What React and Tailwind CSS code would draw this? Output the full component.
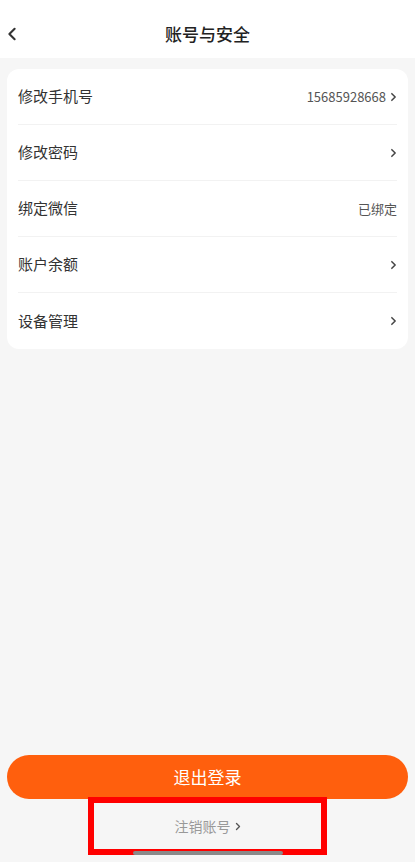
const rows = [
  { label: "修改手机号", value: "15685928668", arrow: true },
  { label: "修改密码", value: "", arrow: true },
  { label: "绑定微信", value: "已绑定", arrow: false },
  { label: "账户余额", value: "", arrow: true },
  { label: "设备管理", value: "", arrow: true },
];

function Chevron({ className = "" }) {
  return (
    <svg viewBox="0 0 8 12" className={className} fill="none" stroke="currentColor" strokeWidth="1.8" strokeLinecap="round" strokeLinejoin="round">
      <path d="M2 2l4 4-4 4" />
    </svg>
  );
}

export default function App() {
  return (
    <div
      className="w-[415px] h-[862px] bg-[#f6f6f6] flex flex-col overflow-hidden"
      style={{ fontFamily: '"Noto Sans CJK SC", "Noto Sans", sans-serif' }}
    >
      <header className="h-[58px] bg-white flex items-center relative shrink-0">
        <svg viewBox="0 0 10 16" className="absolute left-[7px] top-[27px] w-[10px] h-[14px] text-[#333]" fill="none" stroke="currentColor" strokeWidth="2.4" strokeLinecap="round" strokeLinejoin="round">
          <path d="M8 2L2 8l6 6" />
        </svg>
        <h1 className="w-full text-center text-[17px] font-medium text-[#222] pt-[10px]">账号与安全</h1>
      </header>

      <div className="px-[7px] pt-[11px]">
        <div className="bg-white rounded-[12px] px-[11px]">
          {rows.map((row, i) => (
            <div
              key={row.label}
              className={`h-[56px] flex items-center justify-between ${i < rows.length - 1 ? "border-b border-[#f2f2f2]" : ""}`}
            >
              <span className="text-[15px] text-[#333]">{row.label}</span>
              <span className="flex items-center gap-[4px] text-[13px] text-[#555]">
                {row.value}
                {row.arrow ? <Chevron className="w-[7px] h-[10px] text-[#444]" /> : null}
              </span>
            </div>
          ))}
        </div>
      </div>

      <div className="flex-1" />

      <div className="px-[7px]">
        <button className="w-full h-[44px] rounded-full bg-[#ff5f0d] text-white text-[17px]">退出登录</button>
      </div>

      <div className="flex justify-center mt-[-2px]">
        <div className="w-[239px] h-[58px] border-[6px] border-[#f00] flex items-center justify-center gap-[4px] text-[14px] text-[#999]">
          注销账号
          <Chevron className="w-[6px] h-[9px] text-[#555]" />
        </div>
      </div>
      <div className="flex justify-center">
        <div className="w-[150px] h-[4px] bg-[#8a8a8a] rounded-full mt-[-4px]" />
      </div>
      <div className="h-[7px]" />
    </div>
  );
}
